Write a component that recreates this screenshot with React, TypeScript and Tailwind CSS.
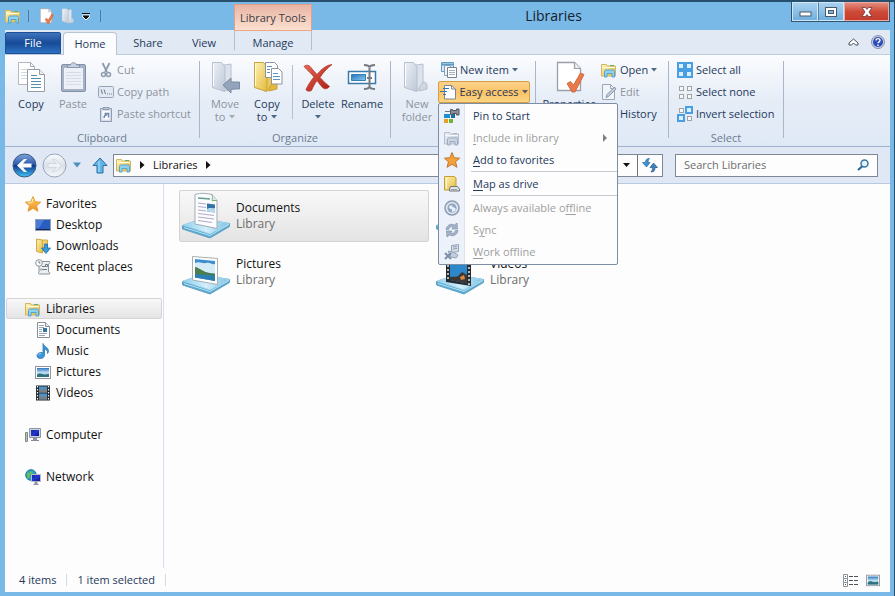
import type { ReactNode } from "react";
import clsx from "clsx";

const Svg = ({ w = 16, h = 16, vb, children }: { w?: number; h?: number; vb?: string; children: ReactNode }) => (
  <svg width={w} height={h} viewBox={vb ?? `0 0 ${w} ${h}`} fill="none" className="shrink-0" aria-hidden="true">
    {children}
  </svg>
);

const Gradients = () => (
  <svg width="0" height="0" className="absolute" aria-hidden="true">
    <defs>
      <linearGradient id="yellow" x1="0" y1="0" x2="1" y2="1">
        <stop offset="0" stopColor="#fdf3b8" />
        <stop offset="1" stopColor="#e5b93c" />
      </linearGradient>
      <linearGradient id="grey" x1="0" y1="0" x2="1" y2="1">
        <stop offset="0" stopColor="#eef2f8" />
        <stop offset="1" stopColor="#bcc6d6" />
      </linearGradient>
      <linearGradient id="sky" x1="0" y1="0" x2="0" y2="1">
        <stop offset="0" stopColor="#2d78bf" />
        <stop offset="0.55" stopColor="#c9e6f3" />
        <stop offset="1" stopColor="#2c7f9e" />
      </linearGradient>
      <linearGradient id="back" x1="0" y1="0" x2="0" y2="1">
        <stop offset="0" stopColor="#7fa3dc" />
        <stop offset="0.45" stopColor="#2c5cae" />
        <stop offset="0.5" stopColor="#10388c" />
        <stop offset="1" stopColor="#42c5f7" />
      </linearGradient>
      <linearGradient id="forward" x1="0" y1="0" x2="0" y2="1">
        <stop offset="0" stopColor="#fafcfe" />
        <stop offset="0.5" stopColor="#d9e0ea" />
        <stop offset="1" stopColor="#f6f9fc" />
      </linearGradient>
      <linearGradient id="screen" x1="0" y1="0" x2="1" y2="1">
        <stop offset="0" stopColor="#15249c" />
        <stop offset="0.5" stopColor="#2438d0" />
        <stop offset="1" stopColor="#0a1270" />
      </linearGradient>
      <linearGradient id="blue" x1="0" y1="0" x2="1" y2="1">
        <stop offset="0" stopColor="#2273b8" />
        <stop offset="1" stopColor="#8ccbf0" />
      </linearGradient>
      <linearGradient id="red" x1="0" y1="0" x2="1" y2="1">
        <stop offset="0" stopColor="#e86a55" />
        <stop offset="1" stopColor="#a81810" />
      </linearGradient>
      <linearGradient id="orange" x1="0" y1="0" x2="0" y2="1">
        <stop offset="0" stopColor="#fdd46a" />
        <stop offset="1" stopColor="#f08a1c" />
      </linearGradient>
      <linearGradient id="glass" x1="0" y1="0" x2="1" y2="0">
        <stop offset="0" stopColor="#8fd0ee" />
        <stop offset="0.5" stopColor="#d3effb" />
        <stop offset="1" stopColor="#7cc0e4" />
      </linearGradient>
    </defs>
  </svg>
);

/* ---------- small icons ---------- */

const LibraryIcon = ({ grey }: { grey?: boolean }) => (
  <Svg>
    <path d="M.5 2.500h5l1 1.500h8v10H.5z" fill={grey ? "url(#grey)" : "url(#yellow)"} stroke={grey ? "#b4bfd0" : "#d3b565"} />
    <path d="M1 5.500h13" stroke={grey ? "#f5f7fa" : "#fffbe0"} />
    <path d="M9 3.500h4" stroke={grey ? "#a9b5c8" : "#5fae6d"} />
    <path d="M3.500 15V9.500c0-.8.5-1.500 1.500-1.500h7c1 0 1.500.7 1.500 1.500V15h-2.500v-3.500h-5V15z" fill={grey ? "#ccd6e4" : "#8fd2ef"} stroke={grey ? "#9baac0" : "#55a3cc"} />
  </Svg>
);

const CheckPageIcon = ({ size = 16 }: { size?: number }) => (
  <Svg w={size} h={size} vb="0 0 32 32">
    <path d="M4.500 1.500h17l6 6v22h-23z" fill="#fff" stroke="#9a9fa8" strokeWidth="1.300" />
    <path d="M21.500 1.500v6h6" fill="#e9ecf0" stroke="#9a9fa8" strokeWidth="1.200" />
    <path d="M14 22.500l3.500-2 3 3.500L27.500 12l3.500 1.500L22 31h-3z" fill="#e8794a" stroke="#cf5c30" strokeWidth=".8" />
  </Svg>
);

const CutIcon = () => (
  <Svg>
    <path d="M4.500 1l4.500 9M11.500 1L7 10" stroke="#8f9bad" strokeWidth="1.800" />
    <circle cx="5.500" cy="12.500" r="2" stroke="#8f9bad" strokeWidth="1.500" />
    <circle cx="10.500" cy="12.500" r="2" stroke="#8f9bad" strokeWidth="1.500" />
  </Svg>
);

const CopyPathIcon = () => (
  <Svg>
    <rect x=".5" y="2.500" width="15" height="11" rx="1" fill="#e3e9f2" stroke="#97a3b6" />
    <path d="M3 5.500l1.500 4.500M6 5.500l1.500 4.500M9 10h1M11 10h1M13 10h1" stroke="#6f7b8e" />
  </Svg>
);

const PasteShortcutIcon = () => (
  <Svg>
    <path d="M2.500 2.500h11v13h-11z" fill="#d5dde9" stroke="#8e9bb0" />
    <path d="M5 1.500h6v2H5z" fill="#c2ccda" stroke="#8e9bb0" />
    <path d="M4.500 5h7v8.500h-7z" fill="#fff" />
    <path d="M6 12c0-2 1-3 3-3.500M6.500 7.500h4v4" stroke="#6d86ad" strokeWidth="1.500" />
  </Svg>
);

const NewItemIcon = () => (
  <Svg>
    <path d="M.5.500h12v9H.5z" fill="#d7ebf8" stroke="#5f9dc7" />
    <path d="M1 2.500h11" stroke="#5b9cc9" strokeWidth="2" />
    <path d="M3.500 3.500h6v10h-6z" fill="#eef4fa" stroke="#8a9fb4" />
    <path d="M6.500 5.500h9v10h-9z" fill="#fff" stroke="#77848f" />
    <path d="M8 8.500h6M8 10.500h6M8 12.500h6" stroke="#a3b3c4" />
  </Svg>
);

const EasyAccessIcon = () => (
  <Svg>
    <path d="M4.500 1.500h7l4 3.500v10h-11z" fill="#fff" stroke="#7e8791" />
    <path d="M11.500 1.500v3.500h4" stroke="#7e8791" />
    <path d="M3 4.500h6M0 7.500h7M3 10.500h3" stroke="#2f77b8" strokeWidth="1.200" />
  </Svg>
);

const EditIcon = () => (
  <Svg>
    <path d="M1.500.5h8l4 4v11h-12z" fill="#f1f4f9" stroke="#9ba8ba" />
    <path d="M9.500.5v4h4" stroke="#9ba8ba" />
    <path d="M5 13.500l1-3L13.500 3 15 5l-7.500 7.500z" fill="#c4cedd" stroke="#8897ad" />
  </Svg>
);

const HistoryIcon = () => (
  <Svg>
    <circle cx="8" cy="8" r="6.500" fill="#dff0dc" stroke="#57994d" />
    <path d="M8 4v4l3 2" stroke="#44743d" />
  </Svg>
);

const SelectIcon = ({ cells }: { cells: boolean[] }) => (
  <Svg>
    {cells.map((on, i) => {
      const x = (i % 2) * 8;
      const y = Math.floor(i / 2) * 8;
      return on ? (
        <g key={i}>
          <rect x={x} y={y} width="8" height="8" fill="#4a9fe2" />
          <rect x={x + 2} y={y + 2} width="4" height="4" fill="#d9effb" />
        </g>
      ) : (
        <rect key={i} x={x + 2.5} y={y + 2.5} width="4" height="4" fill="#f7f8fa" stroke="#a3a3a3" />
      );
    })}
  </Svg>
);

const PinIcon = () => (
  <Svg>
    <path d="M0 6h6v4H0z" fill="#1f8fd0" />
    <path d="M7 6h4v4H7z" fill="#1670a8" />
    <path d="M0 11h4v4H0z" fill="#e8a024" />
    <path d="M5 11h4v4H5z" fill="#6fb52c" />
    <path d="M1 3.500h6" stroke="#777" />
    <path d="M6.500 1.500h2v1h4v-1.500h2.500v6h-2.500V5.500h-4v1h-2z" fill="#8c9196" stroke="#54595e" />
  </Svg>
);

const StarIcon = ({ deep }: { deep?: boolean }) => (
  <Svg>
    <path
      d="M8 .5l2.200 5.200 5.500.5-4.200 3.600 1.500 5.500L8 12.300 3 15.300l1.500-5.500L.3 6.200l5.500-.5z"
      fill={deep ? "#f5a03a" : "url(#orange)"}
      stroke={deep ? "#b5722a" : "#e09a2c"}
      strokeWidth=".9"
    />
    {!deep && <path d="M8 3l-1.300 3.700-3.500.3" stroke="#fff3c0" />}
  </Svg>
);

const DriveIcon = () => (
  <Svg>
    <path d="M.5.500h10l1.500 1.500v12H.5z" fill="url(#yellow)" stroke="#c99f30" />
    <path d="M2.500 2v11" stroke="#fff7cf" />
    <path d="M6.500 10.500h7l2 2.500v2h-10v-2z" fill="#e2e4e6" stroke="#6e7479" />
    <path d="M7 13.500h6" stroke="#9a9fa4" />
  </Svg>
);

const OfflineIcon = () => (
  <Svg>
    <circle cx="8" cy="8" r="7" fill="#dbe3ef" stroke="#8d9bb3" strokeWidth="1.500" />
    <circle cx="8" cy="8" r="4.500" fill="#8fa3c2" />
    <path d="M5.500 5.500h3v1.500l3 1v3L8 12V9.500L5 8z" fill="#eaf0f8" />
  </Svg>
);

const SyncIcon = () => (
  <Svg>
    <path d="M2 7.500C2.500 3 7.500 1 10.500 3L13 1l.5 6H8l1.500-2C7.500 4.200 5 5 4.500 7.500z" fill="#a4b2c9" stroke="#8292ac" strokeWidth=".7" />
    <path d="M14 8.500c-.5 4.500-5.500 6.500-8.500 4.500L3 15l-.5-6H8l-1.500 2c2 .8 4.500 0 5-2.500z" fill="#a4b2c9" stroke="#8292ac" strokeWidth=".7" />
  </Svg>
);

const WorkOfflineIcon = () => (
  <Svg>
    <path d="M7.500 1.500l7-1v7l-7 1z" fill="#d7dfeb" stroke="#94a2b8" />
    <path d="M9 3l4-.5M9 5l4-.5" stroke="#8d9bb1" />
    <path d="M4 7l5 1 5 3-2 3-5-1z" fill="#c3cedd" stroke="#94a2b8" />
    <path d="M1 9l6 6M7 9l-6 6" stroke="#7e8ea9" strokeWidth="2" />
  </Svg>
);

const DesktopIcon = () => (
  <Svg>
    <rect x=".5" y="2.500" width="15" height="11" fill="#2a5dc0" stroke="#8ea1b8" />
    <path d="M1 3h8L4 11H1z" fill="#4a7cd4" />
    <path d="M1 12h14v1H1z" fill="#16294d" />
  </Svg>
);

const DownloadsIcon = () => (
  <Svg>
    <path d="M1.500 1l6 1v13l-6-1.500z" fill="url(#yellow)" stroke="#d1aa45" />
    <path d="M7.500 2h5v11h-5z" fill="#f1d272" stroke="#d1aa45" />
    <path d="M9.500 6h3v4h3L11 15.500 6.500 10h3z" fill="#3a9bdd" stroke="#1d6fae" strokeWidth=".8" />
  </Svg>
);

const RecentIcon = () => (
  <Svg>
    <path d="M4 2.500h10.500c1 1 0 2-1 2.500v8c1 0 2 1 1 2H4.500c-1 0-1.500-1-.5-2z" fill="#eceff1" stroke="#8b9298" />
    <circle cx="4" cy="4" r="3.300" fill="#fff" stroke="#8b9298" />
    <path d="M4 2v2h1.500" stroke="#555" strokeWidth=".8" />
    <path d="M7 7.500h3M7 10.500h5M10.500 5.500h2v2h-2zM6 9.500v2" stroke="#727a80" />
  </Svg>
);

const DocumentIcon = () => (
  <Svg>
    <path d="M2.500.5h8l4 4v11h-12z" fill="#fff" stroke="#8a8f96" />
    <path d="M10.500.5v4h4" fill="#e8ebee" stroke="#8a8f96" />
    <path d="M4 3.500h5M4 5.500h5M4 7.500h3M4 9.500h3M4 11.500h8M4 13.500h6" stroke="#9ba5b3" />
    <path d="M8 6h4v4H8z" fill="#2f75a5" />
  </Svg>
);

const MusicIcon = () => (
  <Svg>
    <path d="M8 .5c.5 3 5 3.500 5.500 7 .2 1.500-.5 2.500-1 3 .5-3-1.500-4-3-4.500v6c0 2-1.700 3.500-4 3.500S2 14.300 2 12.700c0-1.700 1.700-3.200 4-3.200.8 0 1.400.1 2 .4z" fill="#3c97d8" stroke="#1f6faf" strokeWidth=".7" />
    <path d="M3.500 12c.3-1 1.500-1.500 2.500-1.500" stroke="#a9dcf8" />
  </Svg>
);

const PictureIcon = ({ w = 16, h = 16 }: { w?: number; h?: number }) => (
  <Svg w={w} h={h} vb="0 0 16 16">
    <rect x=".5" y="2.500" width="15" height="12" fill="#fff" stroke="#8e959c" />
    <rect x="2" y="4" width="12" height="9" fill="url(#sky)" />
    <path d="M2 11c3-3 5-1 7-.5s3-.5 5-.5v3H2z" fill="#2e7280" />
  </Svg>
);

const VideoIcon = () => (
  <Svg>
    <path d="M1 .5h14v15H1z" fill="#22282c" />
    <path d="M4 1.500h8v6H4zM4 8.500h8v6H4z" fill="#4e92c8" />
    <path d="M4 5c3 0 4-2 8-1v3.500H4zM4 12c3-2 5 1 8-1v3.500H4z" fill="#7b8088" />
    <path d="M2.500 1v14M13.500 1v14" stroke="#f3f5f6" strokeWidth="1.200" strokeDasharray="1.500 1.500" />
  </Svg>
);

const ComputerIcon = () => (
  <Svg>
    <path d="M.5 5.500h2v9h-2z" fill="#b9c2bd" stroke="#7f8a84" />
    <path d="M4.500 1.500h11v9h-11z" fill="#cfd3da" stroke="#9196a5" />
    <path d="M6 3h8v6H6z" fill="url(#screen)" />
    <path d="M8.500 11h3v2h-3zM6 13.500h8" fill="#a8adb8" stroke="#858b98" />
  </Svg>
);

const NetworkIcon = () => (
  <Svg>
    <circle cx="6" cy="6" r="5.300" fill="#2d9ec7" stroke="#18749d" />
    <path d="M2 3.500c2 1.500 3-1 5-1.500l1 2-3 2-1 4c-2-1-3-3.500-2-6.500z" fill="#65bd5c" />
    <path d="M6.500 5.500h9v7h-9z" fill="url(#screen)" stroke="#b7bdc9" />
    <path d="M10 13h2v2h-2zM8.500 15.500h5" fill="#9ca2ad" stroke="#8b919e" />
  </Svg>
);

/* ---------- large ribbon icons ---------- */

const CopyIcon = () => (
  <Svg w={32} h={32}>
    <path d="M3.500 1.500h12l4 4v18h-16z" fill="#fff" stroke="#b3b8c0" />
    <path d="M15.500 1.500v4h4" stroke="#a3a9b3" />
    <path d="M6 8.500h7M6 11.500h6M6 14.500h6M6 17.500h6" stroke="#d3d8df" />
    <path d="M12.500 8.500h12l5 5v17h-17z" fill="#fff" stroke="#979da7" />
    <path d="M24.500 8.500v5h5" fill="#e9edf1" stroke="#979da7" />
    <path d="M16 14.500h6M16 17.500h10M16 20.500h10M16 23.500h10M16 26.500h10" stroke="#5490ad" />
  </Svg>
);

const PasteIcon = () => (
  <Svg w={32} h={32}>
    <rect x="4.500" y="3.500" width="24" height="27" rx="1.500" fill="#a5b2c8" stroke="#8492a9" />
    <path d="M7 7h19v21H7z" fill="#edf1f7" />
    <path d="M9 11.500h15M9 14.500h15M9 17.500h15M9 20.500h15M9 23.500h15" stroke="#d5dce7" />
    <path d="M10.500 6.500V4h3c.5-3 5.500-3 6 0h3v2.500z" fill="#c9d2df" stroke="#8795ab" />
  </Svg>
);

const Folder = ({ grey }: { grey?: boolean }) => (
  <>
    <path d="M12 4.500l10-1.500v25l-9 2z" fill={grey ? "#dde3ec" : "#edc95a"} stroke={grey ? "#b6c0cf" : "#c9a23c"} />
    <path d="M3.500 1.500h9l3.500 4v25l-12.500-4z" fill={grey ? "url(#grey)" : "url(#yellow)"} stroke={grey ? "#b6c0cf" : "#c9a23c"} />
    <path d="M4.500 3v22" stroke={grey ? "#fff" : "#fffbe0"} />
    <path d="M22 21c2 0 4 1 4 3v4l-8 2v-3z" fill={grey ? "#ced6e2" : "#e3b83e"} stroke={grey ? "#b6c0cf" : "#c9a23c"} />
  </>
);

const MoveToIcon = () => (
  <Svg w={32} h={32}>
    <Folder grey />
    <path d="M14 24l8-7v4h8.500v7H22v4z" fill="#94a4bb" stroke="#7c8ca4" />
  </Svg>
);

const CopyToIcon = () => (
  <Svg w={32} h={32}>
    <Folder />
    <path d="M14.500 1.500h9l3 3v12h-12z" fill="#fff" stroke="#8e949c" />
    <path d="M20.500 7.500h7l3.500 3.500v12H20.500z" fill="#fff" stroke="#8e949c" />
    <path d="M16 5.500h5M16 8.500h3M16 11.500h3M22 12.500h5M22 15.500h7M22 18.500h7" stroke="#5c93c4" />
  </Svg>
);

const NewFolderIcon = () => (
  <Svg w={32} h={32}>
    <Folder grey />
  </Svg>
);

const DeleteIcon = () => (
  <Svg w={32} h={32}>
    <path
      d="M2 5.500c2-2 5-1.500 6.500.5 2 2.500 4.500 5.500 6.500 7.500C19 9 23 4.500 30 3.500c-5 4-9 8-12 13 3 3.500 6.500 6.500 9.500 9-2 2.500-5 3-7 1-2-2.500-4-4.500-5.500-7-2 3-4 6-5.500 10-2 1-5 1-5.500-1 2-4.500 5-9 8-12.500C9 12 5 9 2 5.500z"
      fill="url(#red)"
      stroke="#b3382c"
      strokeWidth=".8"
    />
  </Svg>
);

const RenameIcon = () => (
  <Svg w={32} h={32}>
    <path d="M2.500 10.500h27v12h-27z" fill="#fff" stroke="#397bad" strokeWidth="1.500" />
    <path d="M5.500 13.500h14v6h-14z" fill="url(#blue)" stroke="#3180b8" />
    <path d="M18 4c3 0 5 .5 5.500 2.500C24 4.500 26 4 29 4M23.500 7v19M18 28c3 0 5-.5 5.500-2.500.5 2 2.500 2.500 5.500 2.500M21 17h5" stroke="#747a80" strokeWidth="2" />
  </Svg>
);

/* ---------- library tiles ---------- */

const Shelf = ({ children }: { children: ReactNode }) => (
  <Svg w={48} h={48}>
    <path d="M.5 33.500L20 27l27.500 4.500v3L28 46 .5 37z" fill="#5ba7ce" stroke="#62a5c7" />
    <path d="M1 33L20 27l27 4.500L28 42z" fill="url(#glass)" stroke="#a3d5ec" />
    <path d="M2 35.500L28 43.500l19-11" stroke="#b7e4f6" />
    {children}
  </Svg>
);

const DocumentsTile = () => (
  <Shelf>
    <path d="M13 2.500c6-2 12-1 17 0l5 6v28l-22-4.500z" fill="#fbfcfe" stroke="#a3abb2" />
    <path d="M30 2.500c.5 2.500.5 4 0 6h5" fill="#dfe9ed" stroke="#7fae7c" />
    <path d="M16 6l12 1" stroke="#609e91" strokeWidth="1.500" />
    <path d="M16 11l8 1M16 14.500l8 1M16 18l8 1M16 21.500l16 2M16 25l16 2M16 28.500l14 2" stroke="#b4a8c6" />
    <path d="M25 11.500l8 1v8l-8-1z" fill="#3274a9" />
    <path d="M25 17c3-2 5 0 8-1v4.500l-8-1z" fill="#b5dbea" />
  </Shelf>
);

const PicturesTile = () => (
  <Shelf>
    <path d="M10.500 8.500l25 2v26l-25-4.500z" fill="#fff" stroke="#a8afb3" />
    <path d="M13 11l20 2v20l-20-3.500z" fill="#3f8fd0" />
    <path d="M13 15c5-2 7 1 11 0s6 2 9 1v10l-20-4z" fill="#d5ecf7" />
    <path d="M13 19c6 1 9 7 20 6.500v2.500l-20-1z" fill="#4c7d4a" />
    <path d="M13 26l20 1.500V33l-20-3.500z" fill="#2b7fb0" />
  </Shelf>
);

const MusicTile = () => (
  <Shelf>
    <path d="M23 3c2 6 11 7 11 15-2-4-5-4-7-5v17c-2 4-13 4-11-2 1-3 5-4 7-3z" fill="#3c97d8" />
  </Shelf>
);

const VideosTile = () => (
  <Shelf>
    <path d="M10 4l25 2v32l-25-4z" fill="#252b2f" />
    <path d="M14 6l17 1.500v12L14 18zM14 20l17 1.500v14L14 32z" fill="#2c87cb" />
    <path d="M14 17l17 1.500v7L14 23z" fill="#2c87cb" />
    <path d="M14 29c4-1 6 1 9-2l3-3 5 3v8.500L14 32z" fill="#3b3835" />
    <path d="M24 29l4-2 1 4-4 1z" fill="#d98a3d" />
    <path d="M12 5v28M33 7v30" stroke="#e3eaec" strokeWidth="1.500" strokeDasharray="2 2" />
  </Shelf>
);

/* ---------- ribbon parts ---------- */

const Caret = () => (
  <svg width="6" height="4" viewBox="0 0 6 4" className="shrink-0 opacity-75" aria-hidden="true">
    <path d="M0 0h6L3 3.500z" fill="currentColor" />
  </svg>
);

interface ButtonProps {
  icon: ReactNode;
  label: string;
  second?: string;
  caret?: boolean;
  disabled?: boolean;
  className?: string;
}

const BigButton = ({ icon, label, second, caret, disabled, className }: ButtonProps) => (
  <button disabled={disabled} className={clsx("flex flex-col items-center pt-0.5 leading-[13px] disabled:text-[#8d939d]", className)}>
    {icon}
    <span className="mt-1">{label}</span>
    {(second || caret) && (
      <span className="flex h-[13px] items-center gap-1">
        {second}
        {caret && <Caret />}
      </span>
    )}
  </button>
);

const SmallButton = ({ icon, label, caret, disabled, className }: ButtonProps) => (
  <button disabled={disabled} className={clsx("flex h-[22px] items-center gap-[3px] whitespace-nowrap disabled:text-[#8d939d]", className)}>
    {icon}
    {label}
    {caret && <Caret />}
  </button>
);

const Group = ({ label, className, children }: { label: string; className: string; children: ReactNode }) => (
  <section aria-label={label} className={clsx("flex shrink-0", className)}>
    <div className="flex min-w-0 flex-1 flex-col">
      <div className="flex h-[72px] items-start">{children}</div>
      <div className="text-center leading-[14px] text-[#6d7b91]">{label}</div>
    </div>
    <div className="mt-0.5 h-[77px] border-l border-[#a9b7cb]" />
  </section>
);

interface MenuRowProps {
  icon: ReactNode;
  text: [string, string, string];
  disabled?: boolean;
  submenu?: boolean;
}

const MenuRow = ({ icon, text, disabled, submenu }: MenuRowProps) => (
  <button role="menuitem" disabled={disabled} className="flex h-[22px] w-full items-center pl-[5px] text-left disabled:text-[#9d9d9d]">
    {icon}
    <span className="ml-[13px] flex-1">
      {text[0]}
      <u className="underline-offset-2">{text[1]}</u>
      {text[2]}
    </span>
    {submenu && (
      <svg width="4" height="8" viewBox="0 0 4 8" className="mr-2.5" aria-hidden="true">
        <path d="M0 0l4 4-4 4z" fill="#7c8087" />
      </svg>
    )}
  </button>
);

const MenuLine = () => <div className="ml-8 h-0.5 border-t border-[#c5cad1]" role="separator" />;

const EasyAccessMenu = () => (
  <div
    role="menu"
    className="absolute top-full left-0 z-10 w-[180px] rounded-xs border border-[#7d8da4] bg-[linear-gradient(to_right,#edf2fa_25px,#dde3ec_25px,#dde3ec_26px,#fdfdfd_26px)] py-px"
  >
    <MenuRow icon={<PinIcon />} text={["Pin to Start", "", ""]} />
    <MenuRow icon={<LibraryIcon grey />} text={["", "I", "nclude in library"]} disabled submenu />
    <MenuRow icon={<StarIcon deep />} text={["", "A", "dd to favorites"]} />
    <MenuLine />
    <MenuRow icon={<DriveIcon />} text={["", "M", "ap as drive"]} />
    <MenuLine />
    <MenuRow icon={<OfflineIcon />} text={["Always available o", "f", "fline"]} disabled />
    <MenuRow icon={<SyncIcon />} text={["S", "y", "nc"]} disabled />
    <MenuRow icon={<WorkOfflineIcon />} text={["", "W", "ork offline"]} disabled />
  </div>
);

const Ribbon = () => (
  <div className="flex border-b border-[#9fb3cf] bg-linear-to-b from-[#fbfcfe] via-[#e6edf7] to-[#dfe9f6] pt-1 pb-px text-[#1e395b]">
    <Group label="Clipboard" className="w-[195px]">
      <BigButton className="ml-1 w-11" icon={<CopyIcon />} label="Copy" />
      <BigButton className="w-10" icon={<PasteIcon />} label="Paste" disabled />
      <div className="ml-[5px] flex flex-col">
        <SmallButton icon={<CutIcon />} label="Cut" disabled />
        <SmallButton icon={<CopyPathIcon />} label="Copy path" disabled />
        <SmallButton icon={<PasteShortcutIcon />} label="Paste shortcut" disabled />
      </div>
    </Group>
    <Group label="Organize" className="w-[191px]">
      <BigButton className="ml-1 w-[42px]" icon={<MoveToIcon />} label="Move" second="to" caret disabled />
      <BigButton className="w-[42px]" icon={<CopyToIcon />} label="Copy" second="to" caret />
      <div className="mt-1.5 ml-1 h-[54px] border-l border-[#b4c0d2]" />
      <BigButton className="ml-[3px] w-[44px]" icon={<DeleteIcon />} label="Delete" caret />
      <BigButton className="w-[44px]" icon={<RenameIcon />} label="Rename" />
    </Group>
    <Group label="New" className="w-[145px]">
      <BigButton className="ml-[5px] w-[42px]" icon={<NewFolderIcon />} label="New" second="folder" disabled />
      <div className="flex flex-col">
        <SmallButton className="ml-[3px]" icon={<NewItemIcon />} label="New item" caret />
        <div className="relative h-[22px]">
          <button
            aria-haspopup="menu"
            aria-expanded="true"
            className="flex h-[22px] w-[92px] items-center justify-center gap-[3px] rounded-xs border border-[#d19f45] bg-linear-to-b from-[#fbd38c] via-[#fcc266] to-[#fdd583] whitespace-nowrap"
          >
            <EasyAccessIcon />
            Easy access
            <Caret />
          </button>
          <EasyAccessMenu />
        </div>
      </div>
    </Group>
    <Group label="Open" className="w-[133px]">
      <BigButton className="ml-1 w-[58px]" icon={<CheckPageIcon size={32} />} label="Properties" caret />
      <div className="ml-[3px] flex flex-col">
        <SmallButton icon={<LibraryIcon />} label="Open" caret />
        <SmallButton icon={<EditIcon />} label="Edit" disabled />
        <SmallButton icon={<HistoryIcon />} label="History" />
      </div>
    </Group>
    <Group label="Select" className="w-[115px]">
      <div className="ml-2 flex flex-col">
        <SmallButton icon={<SelectIcon cells={[true, true, true, true]} />} label="Select all" />
        <SmallButton icon={<SelectIcon cells={[false, false, false, false]} />} label="Select none" />
        <SmallButton icon={<SelectIcon cells={[false, true, true, false]} />} label="Invert selection" />
      </div>
    </Group>
  </div>
);

/* ---------- window frame ---------- */

const TitleBar = () => (
  <header className="flex h-7 items-start">
    <div className="flex h-7 w-[229px] items-center">
      <LibraryIcon />
      <div className="mx-[7px] h-3 border-l border-[#4b7ba5]" />
      <button aria-label="Properties" className="ml-0.5">
        <CheckPageIcon />
      </button>
      <button aria-label="New folder" className="ml-1.5">
        <Svg vb="0 0 30 32">
          <Folder grey />
        </Svg>
      </button>
      <button aria-label="Customize Quick Access Toolbar" className="ml-1.5">
        <Svg w={8} h={7}>
          <path d="M0 1h8M0 3h8L4 7z" stroke="#fff" />
          <path d="M0 .5h8M1 3h6L4 6z" fill="#111" stroke="#111" />
        </Svg>
      </button>
      <div className="ml-2.5 h-3 border-l border-[#4b7ba5]" />
    </div>
    <div className="mt-0.5 flex h-[26px] w-[78px] items-center justify-center border border-b-0 border-[#e59d85] bg-linear-to-b from-[#e8b5a5] to-[#fbe0cf] pt-0.5 text-[11px] whitespace-nowrap text-[#3b3b45]">
      Library Tools
    </div>
    <h1 className="flex-1 pt-1 pl-1 text-center text-[14px] leading-5 text-[#16202c]">Libraries</h1>
    <div className="flex h-5 border border-t-0 border-[#34536f]">
      <button aria-label="Minimize" className="flex w-[26px] items-center justify-center border border-[#cfe8f9] bg-linear-to-b from-[#a9d1ef] to-[#70afdf] pt-1">
        <Svg w={13} h={7}>
          <rect x="1" y="2" width="11" height="4" fill="#fff" stroke="#4c5a68" />
        </Svg>
      </button>
      <button aria-label="Maximize" className="flex w-[26px] items-center justify-center border border-l-[#5a82a3] border-[#cfe8f9] bg-linear-to-b from-[#a9d1ef] to-[#70afdf]">
        <Svg w={12} h={10}>
          <rect x=".5" y=".5" width="11" height="9" fill="#fff" stroke="#4c5a68" />
          <rect x="3.500" y="3.500" width="5" height="3" fill="#7fb5de" stroke="#4c5a68" />
        </Svg>
      </button>
      <button aria-label="Close" className="flex w-[45px] items-center justify-center border border-[#edaca3] bg-linear-to-b from-[#e28b7d] via-[#ce4a38] to-[#c43c2c]">
        <Svg w={12} h={10}>
          <path d="M1 .5h3.500L6 2.500 7.500.5H11L8 5l3 4.500H7.500L6 7.500l-1.500 2H1L4 5z" fill="#fff" stroke="#5f3a3e" strokeWidth=".8" />
        </Svg>
      </button>
    </div>
  </header>
);

const Tabs = () => (
  <nav className="flex h-[25px] items-end border-b border-[#bfcbdc] bg-[#e1e9f4] text-[#1e395b]">
    <button className="h-[22px] w-14 rounded-t-xs border border-[#1d4f96] bg-linear-to-b from-[#3f75bd] via-[#174a97] to-[#2c72c2] text-white">File</button>
    <button className="-mb-px ml-0.5 h-[23px] w-[54px] rounded-t-sm border border-b-0 border-[#b9c4d3] bg-[#fbfcfe]">Home</button>
    <button className="h-[22px] w-[62px]">Share</button>
    <button className="h-[22px] w-[50px]">View</button>
    <button className="mr-0.5 ml-[5px] h-full w-[78px] self-start border-t border-t-[#f0a583] bg-[linear-gradient(#b2bfd1,#b2bfd1),linear-gradient(#b2bfd1,#b2bfd1)] bg-[length:1px_19px] bg-[position:left_top,right_top] bg-no-repeat pt-0.5">
      Manage
    </button>
    <div className="flex h-full flex-1 items-center justify-end gap-3 pr-[5px]">
      <button aria-label="Minimize the Ribbon">
        <Svg w={11} h={8}>
          <path d="M1 5l4.500-4L10 5v2H7.500l-2-2-2 2H1z" fill="#fff" stroke="#454f5c" />
        </Svg>
      </button>
      <button aria-label="Help">
        <Svg w={14} h={14}>
          <circle cx="7" cy="7" r="6.500" fill="#c8cfe0" stroke="#8c93ab" />
          <circle cx="7" cy="7" r="5" fill="#2c4cb8" />
          <path d="M5 5.500c0-2.500 4-2.500 4 0C9 7 7 6.800 7 8.300M7 9.500V11" stroke="#fff" strokeWidth="1.400" />
        </Svg>
      </button>
    </div>
  </nav>
);

const BlackArrow = () => (
  <svg width="5" height="8" viewBox="0 0 5 8" className="shrink-0" aria-hidden="true">
    <path d="M0 0l4.500 4L0 8z" fill="#111" />
  </svg>
);

const AddressRow = () => (
  <div className="flex h-[37px] items-center border-b border-[#b9c9df] bg-[#dfe8f4] pr-3 pl-[7px]">
    <button aria-label="Back">
      <Svg w={25} h={25}>
        <circle cx="12.500" cy="12.500" r="11.500" fill="url(#back)" stroke="#42597f" />
        <path d="M5 12.500L12 6h3l-4 4.500h8.500v4H11l4 4.500h-3z" fill="#fff" />
      </Svg>
    </button>
    <button aria-label="Forward" disabled className="ml-[5px]">
      <Svg w={25} h={25}>
        <circle cx="12.500" cy="12.500" r="11.500" fill="url(#forward)" stroke="#99a4b3" />
        <path d="M19.500 12.500L13 6.500h-2.500l4 4H6v4h8.500l-4 4H13z" fill="#eef2f7" stroke="#d3d9e1" />
      </Svg>
    </button>
    <button aria-label="Recent locations" className="ml-1.5">
      <Svg w={8} h={6}>
        <path d="M0 .5h8L4 5.500z" fill="#4f8fba" />
      </Svg>
    </button>
    <button aria-label="Up" className="ml-[11px]">
      <Svg w={16} h={17}>
        <path d="M8 1l7 7.500h-4V16H5V8.500H1z" fill="#62b5ea" stroke="#2b6f9f" strokeLinejoin="round" />
        <path d="M7 4v11" stroke="#b4e0f8" />
      </Svg>
    </button>
    <div className="ml-[5px] flex h-[23px] flex-1 items-center border border-[#7e8895] bg-[#fdfdfd] text-[#111]">
      <div className="ml-0.5">
        <LibraryIcon />
      </div>
      <div className="ml-2">
        <BlackArrow />
      </div>
      <a href="#libraries" className="mx-2">
        Libraries
      </a>
      <BlackArrow />
      <div className="flex-1" />
      <button aria-label="Previous locations" className="px-[7px]">
        <Svg w={7} h={4}>
          <path d="M0 0h7L3.500 4z" fill="#111" />
        </Svg>
      </button>
      <button aria-label="Refresh" className="flex h-full w-[25px] items-center justify-center border-l border-[#6d747d]">
        <Svg>
          <path d="M7.500 1.500C4.500 1.500 3.500 3 3.500 5.500H.5l4 4.500 3.500-4.500H6c0-2 .5-3 1.500-4z" fill="#3f94cf" stroke="#2468a0" strokeWidth=".7" />
          <path d="M9 15c3 0 4-1.500 4-4.500h2.500L11.500 6 8 10.500h2.500c0 2-.5 3.500-1.500 4.500z" fill="#3f84bf" stroke="#24588c" strokeWidth=".7" />
        </Svg>
      </button>
    </div>
    <label className="ml-3 flex h-[23px] w-[203px] items-center border border-[#7e8895] bg-[#fdfdfd] px-2">
      <input type="search" placeholder="Search Libraries" aria-label="Search Libraries" className="min-w-0 flex-1 outline-none placeholder:text-[#6d6d6d]" />
      <Svg w={12} h={12}>
        <circle cx="7.500" cy="4.500" r="3.500" fill="#e5f3fb" stroke="#3a77a5" strokeWidth="1.500" />
        <path d="M5 7.500L1 11" stroke="#2f6893" strokeWidth="2.200" />
      </Svg>
    </label>
  </div>
);

const navGroups = [
  {
    label: "Favorites",
    icon: <StarIcon />,
    children: [
      { label: "Desktop", icon: <DesktopIcon /> },
      { label: "Downloads", icon: <DownloadsIcon /> },
      { label: "Recent places", icon: <RecentIcon /> },
    ],
  },
  {
    label: "Libraries",
    icon: <LibraryIcon />,
    selected: true,
    children: [
      { label: "Documents", icon: <DocumentIcon /> },
      { label: "Music", icon: <MusicIcon /> },
      { label: "Pictures", icon: <PictureIcon /> },
      { label: "Videos", icon: <VideoIcon /> },
    ],
  },
  { label: "Computer", icon: <ComputerIcon />, children: [] },
  { label: "Network", icon: <NetworkIcon />, children: [] },
];

const NavPane = () => (
  <aside className="flex w-[159px] shrink-0 flex-col gap-[21px] border-r border-[#d5e0ee] px-px pt-[9px] text-[12px]">
    {navGroups.map((g) => (
      <div key={g.label}>
        <a
          href={`#${g.label}`}
          className={clsx(
            "flex h-[21px] items-center gap-[5px] rounded-xs border pl-[18px]",
            g.selected ? "border-[#d5d5d5] bg-linear-to-b from-[#f8f8f8] to-[#e5e5e5]" : "border-transparent"
          )}
        >
          {g.icon}
          {g.label}
        </a>
        {g.children.map((c) => (
          <a key={c.label} href={`#${c.label}`} className="flex h-[21px] items-center gap-[5px] pl-[29px]">
            {c.icon}
            {c.label}
          </a>
        ))}
      </div>
    ))}
  </aside>
);

const libraries = [
  { name: "Documents", icon: <DocumentsTile />, selected: true },
  { name: "Music", icon: <MusicTile /> },
  { name: "Pictures", icon: <PicturesTile /> },
  { name: "Videos", icon: <VideosTile /> },
];

const Content = () => (
  <main className="grid flex-1 auto-rows-[52px] grid-cols-[repeat(auto-fill,250px)] content-start gap-1 pt-1.5 pl-[15px] text-[12px]">
    {libraries.map((l) => (
      <button
        key={l.name}
        className={clsx(
          "flex items-center gap-1.5 rounded-xs border pl-0.5 text-left leading-4",
          l.selected ? "border-[#d3d3d3] bg-linear-to-b from-[#f8f8f8] to-[#e4e4e4]" : "border-transparent"
        )}
      >
        {l.icon}
        <span>
          {l.name}
          <br />
          <span className="text-[#6d6d6d]">Library</span>
        </span>
      </button>
    ))}
  </main>
);

const StatusBar = () => (
  <footer className="flex h-6 items-center pr-2.5 pl-[14px] text-[#1e395b]">
    <span>4 items</span>
    <div className="mx-2.5 h-3 border-l border-[#d3dbe5]" />
    <span>1 item selected</span>
    <div className="ml-2.5 h-3 border-l border-[#d3dbe5]" />
    <div className="flex-1" />
    <button aria-label="Details view" className="mr-2">
      <Svg w={15} h={13}>
        <path d="M.5.5h4v4h-4zM.5 4.500h4v4h-4zM.5 8.500h4v4h-4z" fill="#fff" stroke="#8b9298" />
        <path d="M2 2.500h1M2 6.500h1M2 10.500h1M6 2.500h4M11 2.500h4M6 6.500h4M11 6.500h4M6 10.500h4M11 10.500h4" stroke="#4c555e" />
      </Svg>
    </button>
    <button aria-label="Large icons view">
      <PictureIcon w={14} h={14} />
    </button>
  </footer>
);

export default function App() {
  return (
    <div className="flex min-h-screen flex-col border-t-2 border-r border-t-[#27506f] border-r-[#27506f] bg-[#79b9e8] pr-1 pb-1 pl-[5px] font-['Open_Sans','Segoe_UI',sans-serif] text-[11px] text-[#111]">
      <Gradients />
      <TitleBar />
      <Tabs />
      <Ribbon />
      <AddressRow />
      <div className="flex flex-1 flex-col bg-[#fdfdfd]">
        <div className="flex flex-1">
          <NavPane />
          <Content />
        </div>
        <StatusBar />
      </div>
    </div>
  );
}
